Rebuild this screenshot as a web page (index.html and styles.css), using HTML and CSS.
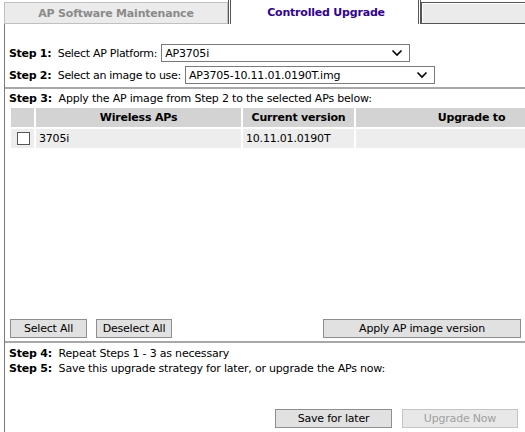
FILE: index.html
```html
<!DOCTYPE html>
<html>
<head>
<meta charset="utf-8">
<link rel="stylesheet" href="styles.css">
</head>
<body>
<div class="tabs">
  <div class="tab tab-inactive">AP Software Maintenance</div>
  <div class="tab tab-active">Controlled Upgrade</div>
  <div class="tab tab-empty"></div>
</div>
<div class="panel">
  <div class="step-row row1">
    <span class="label"><b>Step 1:</b>&nbsp; Select AP Platform:</span>
    <div class="select sel1"><span>AP3705i</span>
      <svg width="12" height="8" viewBox="0 0 12 8"><path d="M1.5 1.5 L6 6 L10.5 1.5" fill="none" stroke="#000" stroke-width="1.6"/></svg>
    </div>
  </div>
  <div class="step-row row2">
    <span class="label"><b>Step 2:</b>&nbsp; Select an image to use:</span>
    <div class="select sel2"><span>AP3705-10.11.01.0190T.img</span>
      <svg width="12" height="8" viewBox="0 0 12 8"><path d="M1.5 1.5 L6 6 L10.5 1.5" fill="none" stroke="#000" stroke-width="1.6"/></svg>
    </div>
  </div>
  <div class="rule"></div>
  <div class="step-text step3"><b>Step 3:</b>&nbsp; Apply the AP image from Step 2 to the selected APs below:</div>
  <table class="aps">
    <thead>
      <tr><th class="c-cb"></th><th class="c-ap">Wireless APs</th><th class="c-cur">Current version</th><th class="c-up">Upgrade to</th></tr>
    </thead>
    <tbody>
      <tr><td class="c-cb"><span class="checkbox"></span></td><td>3705i</td><td>10.11.01.0190T</td><td></td></tr>
    </tbody>
  </table>
  <div class="spacer"></div>
  <div class="btn-row">
    <button class="btn b-sel">Select All</button>
    <button class="btn b-desel">Deselect All</button>
    <button class="btn b-apply">Apply AP image version</button>
  </div>
  <div class="rule rule2"></div>
  <div class="step-text step4"><b>Step 4:</b>&nbsp; Repeat Steps 1 - 3 as necessary</div>
  <div class="step-text step5"><b>Step 5:</b>&nbsp; Save this upgrade strategy for later, or upgrade the APs now:</div>
  <div class="btn-row final">
    <button class="btn b-save">Save for later</button>
    <button class="btn b-now" disabled>Upgrade Now</button>
  </div>
</div>
</body>
</html>
```

FILE: styles.css
```css
html, body {
  margin: 0;
  padding: 0;
  background: #fff;
  overflow: hidden;
}
body {
  width: 525px;
  height: 432px;
  font-family: "DejaVu Sans", sans-serif;
  font-size: 11px;
  letter-spacing: -0.2px;
  color: #000;
}
.tabs {
  display: flex;
  height: 24px;
  padding-top: 2px;
  box-sizing: border-box;
  width: 525px;
  overflow: hidden;
}
.tab {
  box-sizing: border-box;
  display: flex;
  align-items: center;
  justify-content: center;
  font-weight: bold;
  font-size: 11px;
  flex-shrink: 0;
}
.tab-inactive {
  margin-left: 4px;
  width: 224px;
  background: #ebebeb;
  border: 1px solid #c0c0c0;
  color: #8a8a8a;
}
.tab-active {
  margin-top: -2px;
  height: 24px;
  width: 193px;
  background: #fff;
  border-left: 3px double #555;
  border-right: 3px double #555;
  color: #330099;
  padding-left: 3px;
}
.tab-empty {
  flex: 1;
  background: #ebebeb;
  border: 1px solid #555;
  border-right: none;
  box-shadow: inset 1px 1px 0 #fff;
}
.panel {
  margin-left: 4px;
  border-left: 1px solid #7a7a7a;
  height: 408px;
  width: 520px;
  overflow: hidden;
  display: flex;
  flex-direction: column;
}
.step-row {
  display: flex;
  align-items: center;
  padding-left: 4px;
  height: 18px;
  gap: 4px;
}
.row1 { margin-top: 20px; }
.row2 { margin-top: 4px; }
.label { white-space: nowrap; letter-spacing: -0.3px; }
.select {
  box-sizing: border-box;
  height: 18px;
  border: 1px solid #7a7a7a;
  display: flex;
  align-items: center;
  justify-content: space-between;
  padding: 0 6px 0 3px;
  background: #fff;
  flex-shrink: 0;
}
.sel1 { width: 249px; }
.sel2 { width: 250px; }
.rule {
  height: 2px;
  background: #a8a8a8;
  margin-top: 3px;
}
.step-text {
  padding-left: 4px;
  line-height: 15px;
  white-space: nowrap;
}
.step3 { margin-top: 2px; }
.aps {
  margin-left: 4px;
  border-collapse: separate;
  border-spacing: 2px;
  table-layout: fixed;
  width: 580px;
  flex-shrink: 0;
}
.aps th {
  background: #d3d3d3;
  font-weight: bold;
  height: 19px;
  padding: 0;
  text-align: center;
}
.aps td {
  background: #ededed;
  height: 19px;
  padding: 0 0 0 3px;
}
.c-cb { width: 23px; }
.c-ap { width: 205px; }
.c-cur { width: 111px; }
.aps td.c-cb { padding-left: 6px; }
.checkbox {
  display: block;
  width: 11px;
  height: 11px;
  border: 1px solid #555;
  background: #fff;
}
.spacer { flex: 1; }
.btn-row {
  display: flex;
  padding-left: 5px;
  gap: 9px;
}
.btn {
  font-family: inherit;
  font-size: 11px;
  letter-spacing: -0.2px;
  height: 19px;
  padding: 0;
  background: #e1e1e1;
  border: 1px solid #8e8e8e;
  color: #000;
  box-sizing: border-box;
  flex-shrink: 0;
}
.b-sel { width: 77px; }
.b-desel { width: 76px; }
.b-apply { width: 198px; margin-left: 142px; }
.rule2 { margin-top: 3px; }
.step4 { margin-top: 3px; }
.final {
  margin-top: 33px;
  margin-bottom: 4px;
  padding-left: 270px;
  gap: 10px;
}
.b-save { width: 117px; }
.b-now {
  width: 116px;
  color: #a0a0a0;
  border-color: #c4c4c4;
  background: #e8e8e8;
}
```
